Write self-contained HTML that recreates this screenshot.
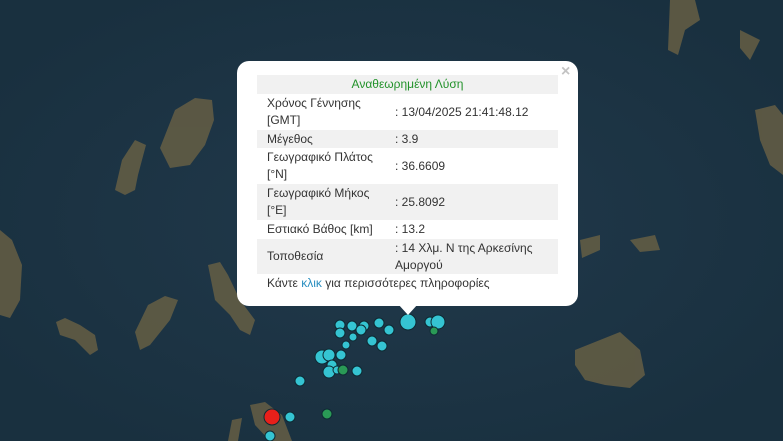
<!DOCTYPE html>
<html><head><meta charset="utf-8"><style>
html,body{margin:0;padding:0;width:783px;height:441px;overflow:hidden;background:#1c3345;font-family:"Liberation Sans","Noto Sans CJK SC",sans-serif}
svg{position:absolute;left:0;top:0}
.pop{position:absolute;left:237px;top:61px;width:341px;height:245px;background:#fff;border-radius:12px}
.tip{position:absolute;left:398px;top:304px;width:0;height:0;border-left:10px solid transparent;border-right:10px solid transparent;border-top:11px solid #fff}
.x{position:absolute;left:561px;top:63px;color:#c3c3c3;font-size:16px;font-weight:bold}
table{position:absolute;left:257px;top:75px;width:301px;border-collapse:collapse;font-size:12px;color:#333;table-layout:fixed}
td{padding:0 0 0 10px;line-height:17px;vertical-align:middle}
tr.g{background:#f1f1f1}
td.v{padding-left:0}
.h{color:#22922a;text-align:center;height:19px;padding:0}
.f{position:absolute;left:267px;top:276px;font-size:12px;color:#333}
.f span{color:#2a8fc0}
</style></head><body>
<svg width="783" height="441" viewBox="0 0 783 441">
<defs><radialGradient id="s" cx="50%" cy="50%" r="60%"><stop offset="0" stop-color="#21394b"/><stop offset="1" stop-color="#19303f"/></radialGradient></defs>
<rect width="783" height="441" fill="url(#s)"/>
<g fill="#5e5a44" opacity="0.95">
<path d="M160 148 L175 110 L195 98 L212 100 L214 120 L205 145 L190 165 L170 168 Z"/>
<path d="M122 160 L135 140 L146 145 L138 175 L135 190 L125 195 L115 190 Z"/>
<path d="M0 230 L12 240 L22 265 L20 300 L10 318 L0 315 Z"/>
<path d="M208 265 L220 262 L228 275 L240 300 L255 320 L250 335 L240 330 L230 315 L215 300 Z"/>
<path d="M135 332 L148 305 L165 296 L178 300 L170 320 L150 345 L140 350 Z"/>
<path d="M56 322 L65 318 L80 325 L95 335 L98 350 L90 355 L75 340 L60 335 Z"/>
<path d="M575 350 L600 340 L620 332 L640 350 L645 375 L630 388 L605 385 L585 380 L575 365 Z"/>
<path d="M670 0 L695 0 L700 20 L685 30 L678 55 L668 50 Z"/>
<path d="M740 30 L760 40 L750 60 L740 48 Z"/>
<path d="M755 110 L775 105 L783 115 L783 175 L770 165 L760 140 Z"/>
<path d="M580 240 L600 235 L600 250 L582 258 Z"/>
<path d="M630 240 L655 235 L660 250 L640 252 Z"/>
<path d="M250 405 L265 402 L282 415 L292 441 L270 441 L255 425 Z"/>
<path d="M232 420 L242 418 L238 441 L228 441 Z"/>
</g>
<g stroke="#0e2a33" stroke-width="1">
<g fill="#35c4d2">
<circle cx="364" cy="326" r="5"/><circle cx="379" cy="323" r="5"/><circle cx="389" cy="330" r="5"/><circle cx="408" cy="322" r="8"/><circle cx="430" cy="322" r="5"/><circle cx="438" cy="322" r="7"/>
<circle cx="340" cy="325" r="5"/><circle cx="352" cy="326" r="5"/>
<circle cx="340" cy="333" r="5"/><circle cx="353" cy="337" r="4"/><circle cx="361" cy="330" r="5"/><circle cx="372" cy="341" r="5"/><circle cx="382" cy="346" r="5"/>
<circle cx="341" cy="355" r="5"/><circle cx="346" cy="345" r="4"/>
<circle cx="322" cy="357" r="7"/><circle cx="329" cy="355" r="6"/><circle cx="332" cy="365" r="5"/><circle cx="329" cy="372" r="6"/><circle cx="337" cy="370" r="4"/>
<circle cx="357" cy="371" r="5"/><circle cx="300" cy="381" r="5"/><circle cx="290" cy="417" r="5"/><circle cx="270" cy="436" r="5"/>
</g>
<g fill="#2a9a56"><circle cx="343" cy="370" r="5"/><circle cx="327" cy="414" r="5"/><circle cx="434" cy="331" r="4"/></g>
<circle cx="272" cy="417" r="8" fill="#e8201a"/>
</g>
</svg>
<div class="tip"></div>
<div class="pop"></div>
<div class="x">×</div>
<table>
<colgroup><col style="width:138px"><col></colgroup>
<tr class="g"><td colspan="2" class="h">Αναθεωρημένη Λύση</td></tr>
<tr style="height:36px"><td>Χρόνος Γέννησης<br>[GMT]</td><td class="v">: 13/04/2025 21:41:48.12</td></tr>
<tr class="g" style="height:18px"><td>Μέγεθος</td><td class="v">: 3.9</td></tr>
<tr style="height:36px"><td>Γεωγραφικό Πλάτος<br>[°N]</td><td class="v">: 36.6609</td></tr>
<tr class="g" style="height:36px"><td>Γεωγραφικό Μήκος<br>[°E]</td><td class="v">: 25.8092</td></tr>
<tr style="height:19px"><td>Εστιακό Βάθος [km]</td><td class="v">: 13.2</td></tr>
<tr class="g" style="height:35px"><td>Τοποθεσία</td><td class="v">: 14 Χλμ. Ν της Αρκεσίνης<br>Αμοργού</td></tr>
</table>
<div class="f">Κάντε <span>κλικ</span> για περισσότερες πληροφορίες</div>
</body></html>
